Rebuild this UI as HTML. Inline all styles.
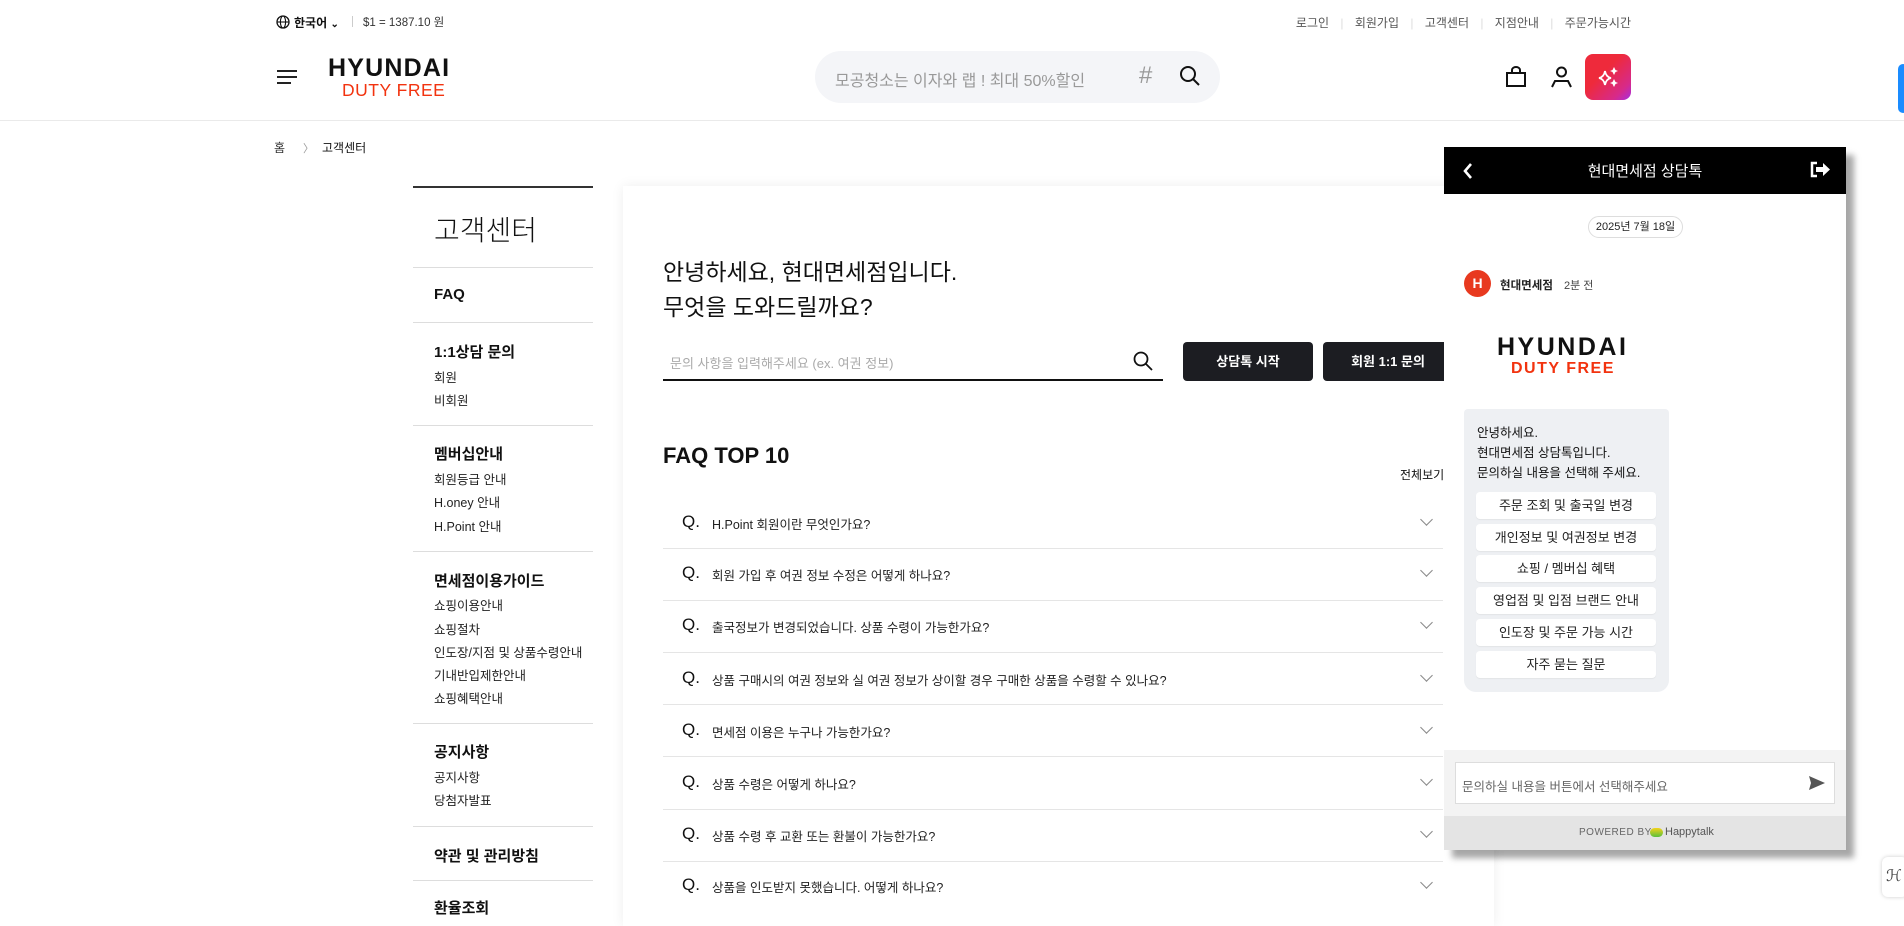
<!DOCTYPE html>
<html><head><meta charset="utf-8">
<style>
*{margin:0;padding:0;box-sizing:border-box}
body{width:1904px;height:910px;overflow:hidden;background:#fff;font-family:"Liberation Sans","Noto Sans CJK KR",sans-serif;color:#111;position:relative}
.a{position:absolute;white-space:nowrap}
.t12{font-size:12px}.t13{font-size:13px}
.side .h{position:absolute;left:21px;font-size:15px;font-weight:bold;color:#111}
.side .s{position:absolute;left:21px;font-size:12.5px;color:#222}
.side .d{position:absolute;left:0;width:180px;height:1px;background:#ddd}
.faq{position:absolute;left:663px;width:780px;height:1px;background:#e5e5e5}
.q{position:absolute;left:682px;font-size:17px;color:#111}
.qt{position:absolute;left:712px;font-size:12.5px;color:#222}
.chev{position:absolute;left:1422px;width:9px;height:9px;border-right:1.3px solid #888;border-bottom:1.3px solid #888;transform:rotate(45deg)}
.cb{position:absolute;left:1476px;width:180px;height:27px;background:#fff;border-radius:4px;text-align:center;font-size:13px;line-height:27px;color:#222;box-shadow:0 1px 1px rgba(0,0,0,.05)}
</style></head><body>

<!-- top bar -->
<svg class="a" style="left:276px;top:15px" width="14" height="14" viewBox="0 0 14 14"><circle cx="7" cy="7" r="6" fill="none" stroke="#111" stroke-width="1.3"/><ellipse cx="7" cy="7" rx="2.6" ry="6" fill="none" stroke="#111" stroke-width="1.1"/><line x1="1" y1="7" x2="13" y2="7" stroke="#111" stroke-width="1.1"/></svg>
<div class="a t12" style="left:294px;top:14px;font-weight:bold">한국어 <span style="font-size:10px">⌄</span></div>
<div class="a" style="left:352px;top:16px;width:1px;height:11px;background:#ccc"></div>
<div class="a" style="left:363px;top:14px;font-size:11.5px;color:#333">$1 = 1387.10 원</div>
<div class="a t12" style="right:273px;top:14px;color:#555;word-spacing:0">로그인 <span style="color:#ddd;margin:0 8px">|</span> 회원가입 <span style="color:#ddd;margin:0 8px">|</span> 고객센터 <span style="color:#ddd;margin:0 8px">|</span> 지점안내 <span style="color:#ddd;margin:0 8px">|</span> 주문가능시간</div>

<!-- header -->
<div class="a" style="left:277px;top:70px;width:20px;height:2px;background:#222"></div>
<div class="a" style="left:277px;top:76px;width:20px;height:2px;background:#222"></div>
<div class="a" style="left:277px;top:82px;width:14px;height:2px;background:#222"></div>
<div class="a" style="left:328px;top:54px;font-size:25px;letter-spacing:1.2px;color:#111;font-weight:bold">HYUNDAI</div>
<div class="a" style="left:342px;top:80px;font-size:17.5px;color:#f2330f;letter-spacing:0.5px">DUTY FREE</div>
<div class="a" style="left:815px;top:51px;width:405px;height:52px;border-radius:26px;background:#f4f5f8"></div>
<div class="a" style="left:835px;top:67px;font-size:16px;color:#999">모공청소는 이자와 랩 ! 최대 50%할인</div>
<div class="a" style="left:1139px;top:62px;font-size:24px;color:#999">#</div>
<svg class="a" style="left:1179px;top:65px" width="22" height="22" viewBox="0 0 22 22"><circle cx="9" cy="9" r="7" fill="none" stroke="#111" stroke-width="2"/><line x1="14" y1="14" x2="20" y2="20" stroke="#111" stroke-width="2"/></svg>
<svg class="a" style="left:1505px;top:66px" width="22" height="22" viewBox="0 0 22 22"><path d="M2 7h18v13H2z M7 7V4a4 3 0 0 1 8 0v3" fill="none" stroke="#111" stroke-width="2"/></svg>
<svg class="a" style="left:1550px;top:66px" width="23" height="22" viewBox="0 0 23 22"><circle cx="11.5" cy="6" r="4.5" fill="none" stroke="#111" stroke-width="2"/><path d="M2 21l3-6h13l3 6" fill="none" stroke="#111" stroke-width="2"/></svg>
<div class="a" style="left:1585px;top:54px;width:46px;height:46px;border-radius:8px;background:linear-gradient(135deg,#ee2a3b 40%,#d72a8a 80%,#a62ee0)"></div>
<svg class="a" style="left:1596px;top:66px" width="24" height="22" viewBox="0 0 24 22"><path d="M9 5 Q10 11 15 12 Q10 13 9 19 Q8 13 3 12 Q8 11 9 5Z" fill="none" stroke="#fff" stroke-width="1.8"/><path d="M18 1 L19.5 4 L22 5 L19.5 6 L18 9 L16.5 6 L14 5 L16.5 4Z M18 13 L19.5 16 L22 17 L19.5 18 L18 21 L16.5 18 L14 17 L16.5 16Z" fill="#fff"/></svg>
<div class="a" style="left:1898px;top:64px;width:10px;height:49px;border-radius:6px;background:#1a8cff"></div>
<div class="a" style="left:0;top:120px;width:1904px;height:1px;background:#eaeaea"></div>

<!-- breadcrumb -->
<div class="a t12" style="left:274px;top:139px;color:#333">홈</div>
<div class="a" style="left:303px;top:140px;font-size:11px;color:#999">〉</div>
<div class="a t12" style="left:322px;top:139px;color:#111">고객센터</div>

<!-- sidebar -->
<div class="a side" style="left:413px;top:186px;width:180px;height:724px">
<div class="a" style="left:0;top:0;width:180px;height:2px;background:#333"></div>
<div class="a" style="left:21px;top:23px;font-size:28px;color:#111;font-weight:300">고객센터</div>
<div class="d" style="top:81px"></div>
<div class="h" style="top:100px">FAQ</div>
<div class="d" style="top:136px"></div>
<div class="h" style="top:155px">1:1상담 문의</div>
<div class="s" style="top:181px">회원</div>
<div class="s" style="top:204px">비회원</div>
<div class="d" style="top:239px"></div>
<div class="h" style="top:257px">멤버십안내</div>
<div class="s" style="top:283px">회원등급 안내</div>
<div class="s" style="top:306px">H.oney 안내</div>
<div class="s" style="top:330px">H.Point 안내</div>
<div class="d" style="top:365px"></div>
<div class="h" style="top:384px">면세점이용가이드</div>
<div class="s" style="top:409px">쇼핑이용안내</div>
<div class="s" style="top:433px">쇼핑절차</div>
<div class="s" style="top:456px">인도장/지점 및 상품수령안내</div>
<div class="s" style="top:479px">기내반입제한안내</div>
<div class="s" style="top:502px">쇼핑혜택안내</div>
<div class="d" style="top:537px"></div>
<div class="h" style="top:555px">공지사항</div>
<div class="s" style="top:581px">공지사항</div>
<div class="s" style="top:604px">당첨자발표</div>
<div class="d" style="top:640px"></div>
<div class="h" style="top:659px">약관 및 관리방침</div>
<div class="d" style="top:694px"></div>
<div class="h" style="top:711px">환율조회</div>
</div>

<!-- main card -->
<div class="a" style="left:623px;top:186px;width:871px;height:740px;background:#fff;box-shadow:0 0 12px rgba(0,0,0,.07)"></div>
<div class="a" style="left:663px;top:255px;font-size:23px;line-height:35px;color:#111">안녕하세요, 현대면세점입니다.<br>무엇을 도와드릴까요?</div>
<div class="a" style="left:670px;top:353px;font-size:13px;color:#aaa">문의 사항을 입력해주세요 (ex. 여권 정보)</div>
<div class="a" style="left:663px;top:379px;width:500px;height:2px;background:#111"></div>
<svg class="a" style="left:1133px;top:351px" width="20" height="20" viewBox="0 0 20 20"><circle cx="8" cy="8" r="6.5" fill="none" stroke="#111" stroke-width="1.8"/><line x1="13" y1="13" x2="19" y2="19" stroke="#111" stroke-width="1.8"/></svg>
<div class="a" style="left:1183px;top:342px;width:130px;height:39px;background:#1c1d22;border-radius:4px;color:#fff;font-size:13px;font-weight:bold;text-align:center;line-height:39px">상담톡 시작</div>
<div class="a" style="left:1323px;top:342px;width:130px;height:39px;background:#1c1d22;border-radius:4px;color:#fff;font-size:13px;font-weight:bold;text-align:center;line-height:39px">회원 1:1 문의</div>
<div class="a" style="left:663px;top:443px;font-size:22px;font-weight:bold;color:#111">FAQ TOP 10</div>
<div class="a t12" style="left:1400px;top:466px;color:#111">전체보기</div>

<div class="q" style="top:512px">Q.</div><div class="qt" style="top:514px">H.Point 회원이란 무엇인가요?</div><div class="chev" style="top:515px"></div>
<div class="faq" style="top:548px"></div>
<div class="q" style="top:563px">Q.</div><div class="qt" style="top:565px">회원 가입 후 여권 정보 수정은 어떻게 하나요?</div><div class="chev" style="top:566px"></div>
<div class="faq" style="top:600px"></div>
<div class="q" style="top:615px">Q.</div><div class="qt" style="top:617px">출국정보가 변경되었습니다. 상품 수령이 가능한가요?</div><div class="chev" style="top:618px"></div>
<div class="faq" style="top:652px"></div>
<div class="q" style="top:668px">Q.</div><div class="qt" style="top:670px">상품 구매시의 여권 정보와 실 여권 정보가 상이할 경우 구매한 상품을 수령할 수 있나요?</div><div class="chev" style="top:671px"></div>
<div class="faq" style="top:704px"></div>
<div class="q" style="top:720px">Q.</div><div class="qt" style="top:722px">면세점 이용은 누구나 가능한가요?</div><div class="chev" style="top:723px"></div>
<div class="faq" style="top:756px"></div>
<div class="q" style="top:772px">Q.</div><div class="qt" style="top:774px">상품 수령은 어떻게 하나요?</div><div class="chev" style="top:775px"></div>
<div class="faq" style="top:809px"></div>
<div class="q" style="top:824px">Q.</div><div class="qt" style="top:826px">상품 수령 후 교환 또는 환불이 가능한가요?</div><div class="chev" style="top:827px"></div>
<div class="faq" style="top:861px"></div>
<div class="q" style="top:875px">Q.</div><div class="qt" style="top:877px">상품을 인도받지 못했습니다. 어떻게 하나요?</div><div class="chev" style="top:878px"></div>

<!-- chat panel -->
<div class="a" style="left:1444px;top:147px;width:402px;height:703px;background:#fff;box-shadow:8px 8px 6px rgba(0,0,0,.35)"></div>
<div class="a" style="left:1444px;top:147px;width:402px;height:47px;background:#000"></div>
<svg class="a" style="left:1462px;top:162px" width="12" height="18" viewBox="0 0 12 18"><path d="M9 2L3 9l6 7" fill="none" stroke="#fff" stroke-width="2.6"/></svg>
<div class="a" style="left:1444px;top:160px;width:402px;text-align:center;color:#fff;font-size:15px">현대면세점 상담톡</div>
<svg class="a" style="left:1809px;top:161px" width="22" height="17" viewBox="0 0 22 17"><path d="M8 2H3v13h5" fill="none" stroke="#fff" stroke-width="2.5"/><path d="M7 6h7V2l7 6.5-7 6.5v-4H7z" fill="#fff"/></svg>
<div class="a" style="left:1588px;top:216px;width:95px;height:22px;border:1px solid #ddd;border-radius:11px;text-align:center;font-size:11px;line-height:20px;color:#222">2025년 7월 18일</div>
<div class="a" style="left:1464px;top:270px;width:27px;height:27px;border-radius:50%;background:#e8391f;color:#fff;font-size:14px;font-weight:bold;text-align:center;line-height:27px">H</div>
<div class="a" style="left:1500px;top:277px;font-size:11.5px;color:#222;font-weight:bold">현대면세점</div>
<div class="a" style="left:1564px;top:277px;font-size:11px;color:#444">2분 전</div>
<div class="a" style="left:1497px;top:333px;font-size:25px;font-weight:bold;color:#111;letter-spacing:2.5px">HYUNDAI</div>
<div class="a" style="left:1511px;top:360px;font-size:16px;font-weight:bold;color:#f2330f;letter-spacing:1.5px">DUTY FREE</div>
<div class="a" style="left:1464px;top:409px;width:205px;height:283px;background:#eef0f3;border-radius:4px 4px 12px 12px"></div>
<div class="a" style="left:1477px;top:423px;font-size:12.5px;line-height:20px;color:#111">안녕하세요.<br>현대면세점 상담톡입니다.<br>문의하실 내용을 선택해 주세요.</div>
<div class="cb" style="top:492px">주문 조회 및 출국일 변경</div>
<div class="cb" style="top:524px">개인정보 및 여권정보 변경</div>
<div class="cb" style="top:555px">쇼핑 / 멤버십 혜택</div>
<div class="cb" style="top:587px">영업점 및 입점 브랜드 안내</div>
<div class="cb" style="top:619px">인도장 및 주문 가능 시간</div>
<div class="cb" style="top:651px">자주 묻는 질문</div>
<div class="a" style="left:1444px;top:750px;width:402px;height:66px;background:#f3f3f3"></div>
<div class="a" style="left:1455px;top:762px;width:380px;height:42px;background:#fff;border:1px solid #ddd"></div>
<div class="a" style="left:1462px;top:776px;font-size:12.5px;color:#666">문의하실 내용을 버튼에서 선택해주세요</div>
<svg class="a" style="left:1809px;top:776px" width="16" height="14" viewBox="0 0 16 14"><path d="M0 0L16 7 0 14 2 7z" fill="#555"/></svg>
<div class="a" style="left:1444px;top:816px;width:402px;height:34px;background:#e4e4e4"></div>
<div class="a" style="left:1579px;top:827px;font-size:10px;color:#666;letter-spacing:0.5px">POWERED BY</div>
<div class="a" style="left:1650px;top:828px;width:13px;height:9px;border-radius:5px;background:linear-gradient(#f4d21a,#5ac03c)"></div>
<div class="a" style="left:1665px;top:826px;font-size:11px;color:#555">Happytalk</div>

<div class="a" style="left:1882px;top:857px;width:26px;height:40px;background:#fff;border-radius:6px;box-shadow:0 0 4px rgba(0,0,0,.2)"></div>
<div class="a" style="left:1886px;top:866px;font-size:16px;color:#444">ℋ</div>
</body></html>
